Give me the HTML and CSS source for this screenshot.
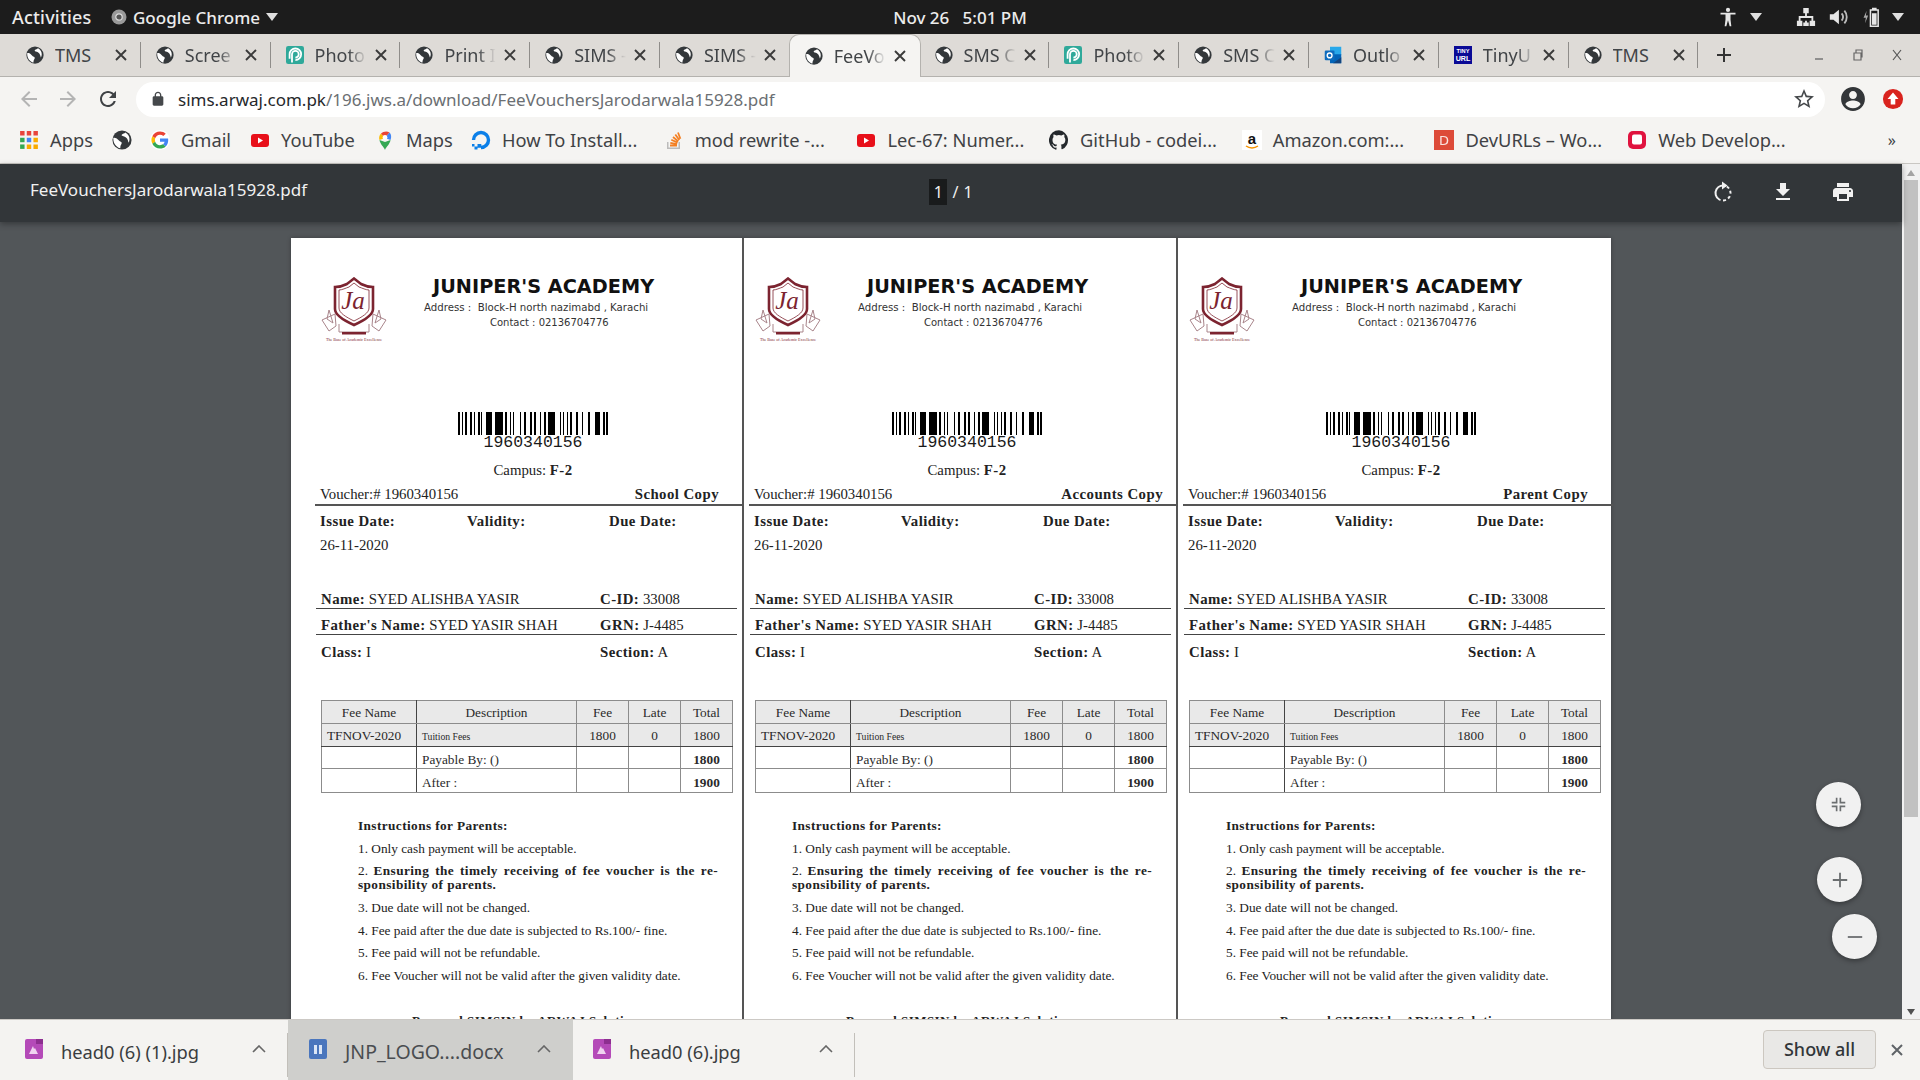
FILE: index.html
```html
<!DOCTYPE html>
<html lang="en">
<head>
<meta charset="utf-8">
<title>FeeVouchersJarodarwala15928.pdf</title>
<link rel="stylesheet" href="styles.css">
</head>
<body>
<svg class="defs" width="0" height="0" aria-hidden="true">
  <defs>
    <symbol id="globe" viewBox="0 0 24 24"><circle cx="12" cy="12" r="11.5" fill="#34383b"/><path fill="#fff" d="M1.500 9.500c2.500-.5 4 .5 5.500 2s2.500 2.500 4 3c1 .5 .8 2 0 3-.8 1-1 2.500-1 4.500-1.500-.3-3-1-4.500-2.500C3 17.500 1.500 14 1.500 9.500zM16 3c-1 1.200-3 1.500-4 2.300s-.3 1.600 1 2c2 .5 4 1.500 5 3s1.500 3.500 1.800 5c.8-1.200 1.200-2.800 1.200-4.300 0-3.500-2-6.500-5-8z"/></symbol>
    <symbol id="photopea" viewBox="0 0 24 24"><rect width="24" height="24" rx="3" fill="#2fa99a"/><path fill="none" stroke="#fff" stroke-width="2.400" d="M8 22V11a4.500 4.500 0 1 1 4.500 4.500M4.800 17V11a7.700 7.700 0 1 1 7.700 7.700"/></symbol>
    <symbol id="close" viewBox="0 0 14 14"><path d="M2 2l10 10M12 2L2 12" stroke="#3a3a3a" stroke-width="1.900" fill="none"/></symbol>
    <symbol id="caret" viewBox="0 0 12 8"><path d="M0 0h12L6 8z" fill="#dfdfdf"/></symbol>
    <symbol id="barcode" viewBox="0 0 150 23" preserveAspectRatio="none"><path fill="#000" d="M0 0h2v23H0zM4 0h1v23H4zM7 0h2v23H7zM12 0h2v23h-2zM16 0h1v23h-1zM20 0h2v23h-2zM23 0h1v23h-1zM28 0h6v23h-6zM37 0h8v23h-8zM47 0h2v23h-2zM52 0h1v23h-1zM55 0h1v23h-1zM62 0h1v23h-1zM66 0h2v23h-2zM72 0h2v23h-2zM76 0h2v23h-2zM82 0h1v23h-1zM86 0h2v23h-2zM90 0h7v23h-7zM102 0h1v23h-1zM105 0h1v23h-1zM109 0h1v23h-1zM112 0h2v23h-2zM118 0h2v23h-2zM124 0h1v23h-1zM130 0h2v23h-2zM137 0h5v23h-5zM145 0h2v23h-2zM148 0h2v23h-2z"/></symbol>
    <symbol id="crest" viewBox="0 0 66 64">
      <path fill="none" stroke="#a9858b" stroke-width="1" d="M14 37L1 43l7 11 7-5zM52 37l13 6-7 11-7-5zM8 33l-2 9 6 4zM58 33l2 9-6 4zM18 47v8h30v-8"/>
      <path fill="#fff" stroke="#7c2430" stroke-width="2.600" d="M33 1.500l7 5.500c4 2 8 3 12 3v22c0 6-10 12-19 16-9-4-19-10-19-16V10c4 0 8-1 12-3z"/>
      <path fill="none" stroke="#7c2430" stroke-width=".8" d="M33 6l5 4c3 1 7 3 10 3v18c0 5-7 9-15 13-8-4-15-8-15-13V13c3 0 7-2 10-3z"/>
      <path fill="#7c2430" d="M21 55h24v2.500H21z"/>
      <text class="crest-ja" x="32" y="32" text-anchor="middle">Ja</text>
      <text class="crest-tag" x="33" y="63.500" text-anchor="middle">The Base of Academic Excellence</text>
    </symbol>
  </defs>
</svg>

<div class="app">
  <header class="sysbar">
    <div class="sys-left">
      <span class="sys-activities">Activities</span>
      <svg class="sys-chrome" viewBox="0 0 16 16"><circle cx="8" cy="8" r="7.500" fill="#9a9a9a"/><circle cx="8" cy="8" r="3.200" fill="#555" stroke="#ddd" stroke-width="1.200"/></svg>
      <span>Google Chrome</span>
      <svg class="sys-caret" viewBox="0 0 12 8"><use href="#caret"/></svg>
    </div>
    <div class="sys-clock">Nov 26&nbsp;&nbsp;&nbsp;5:01 PM</div>
    <div class="sys-right">
      <svg class="sys-icon" viewBox="0 0 20 24"><circle cx="10" cy="3.500" r="2.500" fill="#e6e6e6"/><path fill="#e6e6e6" d="M1 7h18v2h-6v6l1 8h-2l-2-7-2 7H6l1-8V9H1z"/></svg>
      <svg class="sys-caret caret-a" viewBox="0 0 12 8"><use href="#caret"/></svg>
      <svg class="sys-icon net" viewBox="0 0 22 22"><path fill="#e6e6e6" d="M8 1h6v6h-2v3h7v5h2v6h-6v-6h2v-3h-12v3h2v6H1v-6h2v-5h7V7H8zM10 15h2v2h2v4H8v-4h2z"/></svg>
      <svg class="sys-icon vol" viewBox="0 0 22 22"><path fill="#e6e6e6" d="M2 8h4l6-5v16l-6-5H2z"/><path fill="none" stroke="#bbb" stroke-width="2" d="M15 7c2 2.500 2 5.500 0 8M18 4c3.500 4 3.500 10 0 14"/></svg>
      <svg class="sys-icon batt" viewBox="0 0 24 26"><path fill="none" stroke="#e6e6e6" stroke-width="2" d="M10 4h10v21H10z"/><path fill="#e6e6e6" d="M12 1h6v3h-6zM12 8h6v15h-6z"/><path fill="#aaa" d="M5 5L1 14h3l-1 7 4-10H4z"/></svg>
      <svg class="sys-caret caret-b" viewBox="0 0 12 8"><use href="#caret"/></svg>
    </div>
  </header>

  <nav class="tabstrip">
    <div class="tab"><svg class="fav"><use href="#globe"/></svg><span class="tab-title no-fade">TMS</span><svg class="tab-x"><use href="#close"/></svg></div>
    <div class="tab"><svg class="fav"><use href="#globe"/></svg><span class="tab-title">Scree</span><svg class="tab-x"><use href="#close"/></svg></div>
    <div class="tab"><svg class="fav"><use href="#photopea"/></svg><span class="tab-title">Photo</span><svg class="tab-x"><use href="#close"/></svg></div>
    <div class="tab"><svg class="fav"><use href="#globe"/></svg><span class="tab-title">Print I</span><svg class="tab-x"><use href="#close"/></svg></div>
    <div class="tab"><svg class="fav"><use href="#globe"/></svg><span class="tab-title">SIMS -</span><svg class="tab-x"><use href="#close"/></svg></div>
    <div class="tab"><svg class="fav"><use href="#globe"/></svg><span class="tab-title">SIMS -</span><svg class="tab-x"><use href="#close"/></svg></div>
    <div class="tab tab-active"><svg class="fav"><use href="#globe"/></svg><span class="tab-title">FeeVo</span><svg class="tab-x"><use href="#close"/></svg></div>
    <div class="tab"><svg class="fav"><use href="#globe"/></svg><span class="tab-title">SMS C</span><svg class="tab-x"><use href="#close"/></svg></div>
    <div class="tab"><svg class="fav"><use href="#photopea"/></svg><span class="tab-title">Photo</span><svg class="tab-x"><use href="#close"/></svg></div>
    <div class="tab"><svg class="fav"><use href="#globe"/></svg><span class="tab-title">SMS C</span><svg class="tab-x"><use href="#close"/></svg></div>
    <div class="tab"><svg class="fav" viewBox="0 0 24 24"><path fill="#28a8ea" d="M8 1h15v11H8z"/><path fill="#0364b8" d="M8 11h15v12H8z"/><path fill="#14447d" d="M12 23l11-8v8z"/><rect x="1" y="6" width="13" height="13" rx="1.500" fill="#0f6cbd"/><circle cx="7.500" cy="12.500" r="3.200" fill="none" stroke="#fff" stroke-width="1.800"/></svg><span class="tab-title">Outlo</span><svg class="tab-x"><use href="#close"/></svg></div>
    <div class="tab"><svg class="fav" viewBox="0 0 24 24"><rect width="24" height="24" fill="#0a0a96"/><text class="tiny-top" x="12" y="9" text-anchor="middle">TINY</text><text class="tiny-bot" x="12" y="20" text-anchor="middle">URL</text></svg><span class="tab-title">TinyU</span><svg class="tab-x"><use href="#close"/></svg></div>
    <div class="tab"><svg class="fav"><use href="#globe"/></svg><span class="tab-title no-fade">TMS</span><svg class="tab-x"><use href="#close"/></svg></div>
    <svg class="tab-plus" viewBox="0 0 16 16"><path d="M8 1v14M1 8h14" stroke="#333" stroke-width="2" fill="none"/></svg>
    <div class="winctl">
      <svg class="win-ic" viewBox="0 0 14 14"><path d="M3 11h8" stroke="#666" stroke-width="1.300"/></svg>
      <svg class="win-ic" viewBox="0 0 14 14"><path d="M3 5h7v7H3zM5 5V2h6v7h-1" stroke="#666" stroke-width="1.200" fill="none"/></svg>
      <svg class="win-ic" viewBox="0 0 14 14"><path d="M3 2l8 10M11 2L3 12" stroke="#555" stroke-width="1.200" fill="none"/></svg>
    </div>
  </nav>

  <div class="toolbar">
    <svg class="nav-ic" viewBox="0 0 24 24"><path fill="#b4b4b4" d="M20 11H7.830l5.590-5.590L12 4l-8 8 8 8 1.410-1.410L7.830 13H20v-2z"/></svg>
    <svg class="nav-ic nav-fwd" viewBox="0 0 24 24"><path fill="#b4b4b4" d="M4 11h12.170l-5.590-5.590L12 4l8 8-8 8-1.410-1.410L16.170 13H4v-2z"/></svg>
    <svg class="nav-ic nav-reload" viewBox="0 0 24 24"><path fill="#3f4245" d="M17.650 6.350C16.200 4.900 14.210 4 12 4c-4.420 0-7.990 3.580-7.990 8s3.570 8 7.990 8c3.730 0 6.840-2.550 7.730-6h-2.080c-.82 2.330-3.040 4-5.650 4-3.310 0-6-2.690-6-6s2.690-6 6-6c1.660 0 3.140.69 4.220 1.780L13 11h7V4l-2.350 2.350z"/></svg>
    <div class="omnibox">
      <svg class="lock" viewBox="0 0 24 24"><path fill="#45484b" d="M18 8h-1V6c0-2.760-2.240-5-5-5S7 3.240 7 6v2H6c-1.100 0-2 .9-2 2v10c0 1.100.9 2 2 2h12c1.100 0 2-.9 2-2V10c0-1.100-.9-2-2-2zM9 6c0-1.660 1.340-3 3-3s3 1.340 3 3v2H9V6z"/></svg>
      <span class="url"><span class="url-host">sims.arwaj.com.pk</span>/196.jws.a/download/FeeVouchersJarodarwala15928.pdf</span>
      <svg class="star" viewBox="0 0 24 24"><path fill="#45484b" d="M22 9.240l-7.190-.62L12 2 9.190 8.630 2 9.240l5.460 4.730L5.820 21 12 17.270 18.180 21l-1.630-7.030L22 9.240zM12 15.400l-3.760 2.270 1-4.280-3.320-2.880 4.380-.38L12 6.100l1.710 4.040 4.380.38-3.320 2.880 1 4.280L12 15.400z"/></svg>
    </div>
    <svg class="profile" viewBox="0 0 24 24"><path fill="#333639" d="M12 1C5.900 1 1 5.900 1 12s4.900 11 11 11 11-4.900 11-11S18.100 1 12 1zm0 3.500c2 0 3.600 1.700 3.600 3.800S14 12.100 12 12.100 8.400 10.400 8.400 8.300 10 4.500 12 4.500zm0 16c-2.900 0-5.500-1.500-7-3.700.1-2.300 4.700-3.500 7-3.500s6.900 1.200 7 3.500c-1.500 2.200-4.100 3.700-7 3.700z"/></svg>
    <svg class="update" viewBox="0 0 24 24"><circle cx="12" cy="12" r="11" fill="#d9231e"/><path fill="#fff" d="M12 5l6 7h-3.500v6h-5v-6H6z"/></svg>
  </div>

  <div class="bookmarks">
    <div class="bm bm-apps"><svg class="bm-ic" viewBox="0 0 18 18"><path fill="#e8453c" d="M1 1h4v4H1zM7 1h4v4H7zM13 1h4v4h-4z"/><path fill="#34a853" d="M1 7h4v4H1z"/><path fill="#f9ab00" d="M13 7h4v4h-4zM7 13h4v4H7zM13 13h4v4h-4z"/><path fill="#4285f4" d="M7 7h4v4H7z"/><path fill="#34a853" d="M1 13h4v4H1z"/></svg><span>Apps</span></div>
    <div class="bm bm-globe"><svg class="bm-ic"><use href="#globe"/></svg></div>
    <div class="bm bm-gmail"><svg class="bm-ic" viewBox="-4 -4 56 56"><circle cx="24" cy="24" r="28" fill="#fff"/><path fill="#EA4335" d="M24 9.500c3.540 0 6.710 1.220 9.210 3.600l6.850-6.850C35.900 2.380 30.470 0 24 0 14.620 0 6.510 5.380 2.560 13.220l7.980 6.190C12.430 13.720 17.740 9.500 24 9.500z"/><path fill="#4285F4" d="M46.980 24.550c0-1.570-.15-3.090-.38-4.550H24v9.020h12.940c-.58 2.960-2.260 5.480-4.780 7.180l7.730 6c4.510-4.180 7.090-10.360 7.090-17.650z"/><path fill="#FBBC05" d="M10.530 28.590c-.48-1.450-.76-2.990-.76-4.590s.27-3.140.76-4.590l-7.980-6.190C.92 16.460 0 20.120 0 24c0 3.880.92 7.540 2.560 10.780l7.970-6.190z"/><path fill="#34A853" d="M24 48c6.480 0 11.930-2.130 15.890-5.810l-7.730-6c-2.150 1.450-4.920 2.300-8.160 2.300-6.260 0-11.570-4.220-13.470-9.910l-7.980 6.190C6.510 42.620 14.620 48 24 48z"/></svg><span>Gmail</span></div>
    <div class="bm bm-yt"><svg class="bm-ic" viewBox="0 0 20 20"><rect x="1" y="4" width="18" height="13" rx="3" fill="#e8101a"/><path fill="#fff" d="M8 7.500l5 3-5 3z"/></svg><span>YouTube</span></div>
    <div class="bm bm-maps"><svg class="bm-ic" viewBox="0 0 20 20"><path fill="#34a853" d="M10 20c-1-3-5-6-5.500-10L10 12l5.500-2c-.5 4-4.500 7-5.500 10z"/><path fill="#fbbc04" d="M4.500 10C3.500 7.500 4.500 5 6 3.500l4 4.500z"/><path fill="#ea4335" d="M6 3.500C8 1.500 12 .5 14.500 2.500L10 8z"/><path fill="#4285f4" d="M14.500 2.500c2 1.500 2 5 1 7.500L10 8z"/><circle cx="10" cy="7.500" r="2.400" fill="#fff"/></svg><span>Maps</span></div>
    <div class="bm bm-long"><svg class="bm-ic" viewBox="0 0 20 20"><path fill="none" stroke="#0b7fe8" stroke-width="3.400" d="M10 17.500A7.500 7.500 0 1 0 2.500 10"/><path fill="#0b7fe8" d="M6.500 14h3.800v3.800H6.500zM3.500 16.500h3v3h-3zM1 14h2.500v2.500H1z"/></svg><span>How To Install...</span></div>
    <div class="bm bm-long"><svg class="bm-ic" viewBox="0 0 20 20"><path fill="#bcbbbb" d="M3 12v7h13v-7h-1.500v5.500h-10V12z"/><path fill="none" stroke="#f48024" stroke-width="1.800" d="M6 15.500h7M6.300 12.800l6.800 1.400M7.300 9.700l6.300 2.900M9 7l5.300 4.400M11.300 4.500l4 5.500M14 2.500l2.400 6.300"/></svg><span>mod rewrite -...</span></div>
    <div class="bm bm-long"><svg class="bm-ic" viewBox="0 0 20 20"><rect x="1" y="4" width="18" height="13" rx="3" fill="#e8101a"/><path fill="#fff" d="M8 7.500l5 3-5 3z"/></svg><span>Lec-67: Numer...</span></div>
    <div class="bm bm-long"><svg class="bm-ic" viewBox="0 0 24 24"><path fill="#24282c" d="M12 .3a12 12 0 0 0-3.800 23.400c.6.1.8-.3.8-.6v-2c-3.300.7-4-1.600-4-1.600-.6-1.400-1.400-1.800-1.400-1.800-1-.7.1-.7.1-.7 1.200.1 1.800 1.200 1.800 1.200 1 1.800 2.800 1.300 3.500 1 .1-.8.4-1.300.7-1.600-2.700-.3-5.500-1.300-5.500-6 0-1.200.5-2.300 1.300-3.100-.2-.4-.6-1.600 0-3.200 0 0 1-.3 3.400 1.200a11.500 11.500 0 0 1 6 0c2.300-1.500 3.300-1.200 3.300-1.200.6 1.600.2 2.800.1 3.200.8.800 1.300 1.900 1.300 3.100 0 4.600-2.800 5.600-5.500 6 .4.3.8 1 .8 2v3c0 .3.2.7.8.6A12 12 0 0 0 12 .3"/></svg><span>GitHub - codei...</span></div>
    <div class="bm bm-long"><svg class="bm-ic" viewBox="0 0 20 20"><rect width="20" height="20" fill="#fff"/><text class="amz" x="10" y="14" text-anchor="middle">a</text><path fill="none" stroke="#f79400" stroke-width="1.500" d="M4 16c3.500 2.500 8.500 2.500 12 0"/></svg><span>Amazon.com:...</span></div>
    <div class="bm bm-long"><svg class="bm-ic" viewBox="0 0 20 20"><rect width="20" height="20" fill="#dd4b39"/><text class="devd" x="10" y="15" text-anchor="middle">D</text></svg><span>DevURLs – Wo...</span></div>
    <div class="bm bm-long"><svg class="bm-ic" viewBox="0 0 20 20"><rect x="1" y="1" width="18" height="18" rx="5" fill="#e0133f"/><rect x="5" y="4.500" width="10" height="10" rx="2" fill="#fff"/></svg><span>Web Develop...</span></div>
    <span class="bm-more">»</span>
  </div>

  <div class="pdf">
    <main class="pdf-main">
      <div class="pdf-bar">
        <div class="pdf-name">FeeVouchersJarodarwala15928.pdf</div>
        <div class="pdf-pages"><span class="pdf-page-box">1</span><span class="pdf-sep">/</span><span>1</span></div>
        <div class="pdf-actions">
          <svg class="pdf-ic" viewBox="0 0 24 24"><circle cx="12" cy="13" r="7.500" fill="none" stroke="#f1f1f1" stroke-width="2" stroke-dasharray="3 2.500 3 2.500 3 2.500 3 2.500 24 2" transform="rotate(-60 12 13)"/><path fill="#f1f1f1" d="M11 1.500l5.500 4-5.500 4z"/></svg>
          <svg class="pdf-ic" viewBox="0 0 24 24"><path fill="#f1f1f1" d="M19 9h-4V3H9v6H5l7 7 7-7zM5 18v2h14v-2H5z"/></svg>
          <svg class="pdf-ic" viewBox="0 0 24 24"><path fill="#f1f1f1" d="M19 8H5c-1.660 0-3 1.340-3 3v6h4v4h12v-4h4v-6c0-1.660-1.340-3-3-3zm-3 11H8v-5h8v5zm3-7c-.55 0-1-.45-1-1s.45-1 1-1 1 .45 1 1-.45 1-1 1zm-1-9H6v4h12V3z"/></svg>
        </div>
      </div>
      <div class="viewer">
        <div class="sheet">

          <section class="voucher voucher-first">
            <div class="v-head">
              <svg class="crest"><use href="#crest"/></svg>
              <div class="org">
                <div class="org-name">JUNIPER'S ACADEMY</div>
                <div class="org-addr">Address :&nbsp; Block-H north nazimabd , Karachi</div>
                <div class="org-contact">Contact : 02136704776</div>
              </div>
            </div>
            <div class="code">
              <svg class="bars"><use href="#barcode"/></svg>
              <div class="code-num">1960340156</div>
              <div class="campus">Campus: <b>F-2</b></div>
            </div>
            <div class="v-id"><span>Voucher:# 1960340156</span><b>School Copy</b></div>
            <div class="dates"><b>Issue Date:</b><b>Validity:</b><b>Due Date:</b><span>26-11-2020</span></div>
            <div class="info info-first"><span><b>Name:</b> SYED ALISHBA YASIR</span><span><b>C-ID:</b> 33008</span></div>
            <div class="info"><span><b>Father's Name:</b> SYED YASIR SHAH</span><span><b>GRN:</b> J-4485</span></div>
            <div class="info info-last"><span><b>Class:</b> I</span><span><b>Section:</b> A</span></div>
            <table class="fees">
              <tr class="fee-head"><td>Fee Name</td><td>Description</td><td>Fee</td><td>Late</td><td>Total</td></tr>
              <tr class="fee-item"><td class="left">TFNOV-2020</td><td class="left"><small>Tuition Fees</small></td><td>1800</td><td>0</td><td>1800</td></tr>
              <tr class="fee-pay"><td></td><td class="left">Payable By: ()</td><td></td><td></td><td><b>1800</b></td></tr>
              <tr class="fee-after"><td></td><td class="left">After :</td><td></td><td></td><td><b>1900</b></td></tr>
            </table>
            <div class="notes">
              <p class="note-title"><b>Instructions for Parents:</b></p>
              <p>1. Only cash payment will be acceptable.</p>
              <p><span class="note-just">2. <b>Ensuring the timely receiving of fee voucher is the re-</b></span><b class="note-cont">sponsibility of parents.</b></p>
              <p>3. Due date will not be changed.</p>
              <p>4. Fee paid after the due date is subjected to Rs.100/- fine.</p>
              <p>5. Fee paid will not be refundable.</p>
              <p>6. Fee Voucher will not be valid after the given validity date.</p>
            </div>
            <div class="powered"><b>Powered SIMSIN by ARWAJ Solutions</b></div>
          </section>

          <section class="voucher voucher-mid">
            <div class="v-head">
              <svg class="crest"><use href="#crest"/></svg>
              <div class="org">
                <div class="org-name">JUNIPER'S ACADEMY</div>
                <div class="org-addr">Address :&nbsp; Block-H north nazimabd , Karachi</div>
                <div class="org-contact">Contact : 02136704776</div>
              </div>
            </div>
            <div class="code">
              <svg class="bars"><use href="#barcode"/></svg>
              <div class="code-num">1960340156</div>
              <div class="campus">Campus: <b>F-2</b></div>
            </div>
            <div class="v-id"><span>Voucher:# 1960340156</span><b>Accounts Copy</b></div>
            <div class="dates"><b>Issue Date:</b><b>Validity:</b><b>Due Date:</b><span>26-11-2020</span></div>
            <div class="info info-first"><span><b>Name:</b> SYED ALISHBA YASIR</span><span><b>C-ID:</b> 33008</span></div>
            <div class="info"><span><b>Father's Name:</b> SYED YASIR SHAH</span><span><b>GRN:</b> J-4485</span></div>
            <div class="info info-last"><span><b>Class:</b> I</span><span><b>Section:</b> A</span></div>
            <table class="fees">
              <tr class="fee-head"><td>Fee Name</td><td>Description</td><td>Fee</td><td>Late</td><td>Total</td></tr>
              <tr class="fee-item"><td class="left">TFNOV-2020</td><td class="left"><small>Tuition Fees</small></td><td>1800</td><td>0</td><td>1800</td></tr>
              <tr class="fee-pay"><td></td><td class="left">Payable By: ()</td><td></td><td></td><td><b>1800</b></td></tr>
              <tr class="fee-after"><td></td><td class="left">After :</td><td></td><td></td><td><b>1900</b></td></tr>
            </table>
            <div class="notes">
              <p class="note-title"><b>Instructions for Parents:</b></p>
              <p>1. Only cash payment will be acceptable.</p>
              <p><span class="note-just">2. <b>Ensuring the timely receiving of fee voucher is the re-</b></span><b class="note-cont">sponsibility of parents.</b></p>
              <p>3. Due date will not be changed.</p>
              <p>4. Fee paid after the due date is subjected to Rs.100/- fine.</p>
              <p>5. Fee paid will not be refundable.</p>
              <p>6. Fee Voucher will not be valid after the given validity date.</p>
            </div>
            <div class="powered"><b>Powered SIMSIN by ARWAJ Solutions</b></div>
          </section>

          <section class="voucher voucher-last">
            <div class="v-head">
              <svg class="crest"><use href="#crest"/></svg>
              <div class="org">
                <div class="org-name">JUNIPER'S ACADEMY</div>
                <div class="org-addr">Address :&nbsp; Block-H north nazimabd , Karachi</div>
                <div class="org-contact">Contact : 02136704776</div>
              </div>
            </div>
            <div class="code">
              <svg class="bars"><use href="#barcode"/></svg>
              <div class="code-num">1960340156</div>
              <div class="campus">Campus: <b>F-2</b></div>
            </div>
            <div class="v-id"><span>Voucher:# 1960340156</span><b>Parent Copy</b></div>
            <div class="dates"><b>Issue Date:</b><b>Validity:</b><b>Due Date:</b><span>26-11-2020</span></div>
            <div class="info info-first"><span><b>Name:</b> SYED ALISHBA YASIR</span><span><b>C-ID:</b> 33008</span></div>
            <div class="info"><span><b>Father's Name:</b> SYED YASIR SHAH</span><span><b>GRN:</b> J-4485</span></div>
            <div class="info info-last"><span><b>Class:</b> I</span><span><b>Section:</b> A</span></div>
            <table class="fees">
              <tr class="fee-head"><td>Fee Name</td><td>Description</td><td>Fee</td><td>Late</td><td>Total</td></tr>
              <tr class="fee-item"><td class="left">TFNOV-2020</td><td class="left"><small>Tuition Fees</small></td><td>1800</td><td>0</td><td>1800</td></tr>
              <tr class="fee-pay"><td></td><td class="left">Payable By: ()</td><td></td><td></td><td><b>1800</b></td></tr>
              <tr class="fee-after"><td></td><td class="left">After :</td><td></td><td></td><td><b>1900</b></td></tr>
            </table>
            <div class="notes">
              <p class="note-title"><b>Instructions for Parents:</b></p>
              <p>1. Only cash payment will be acceptable.</p>
              <p><span class="note-just">2. <b>Ensuring the timely receiving of fee voucher is the re-</b></span><b class="note-cont">sponsibility of parents.</b></p>
              <p>3. Due date will not be changed.</p>
              <p>4. Fee paid after the due date is subjected to Rs.100/- fine.</p>
              <p>5. Fee paid will not be refundable.</p>
              <p>6. Fee Voucher will not be valid after the given validity date.</p>
            </div>
            <div class="powered"><b>Powered SIMSIN by ARWAJ Solutions</b></div>
          </section>

        </div>
      </div>
      <div class="fab fab-fit"><svg viewBox="0 0 20 20"><path fill="none" stroke="#6b6e70" stroke-width="2.200" d="M7.500 1v6.500H1M12.500 1v6.500H19M7.500 19v-6.500H1M12.500 19v-6.500H19"/></svg></div>
      <div class="fab fab-plus"><svg viewBox="0 0 20 20"><path fill="none" stroke="#6b6e70" stroke-width="2" d="M10 2v16M2 10h16"/></svg></div>
      <div class="fab fab-minus"><svg viewBox="0 0 20 20"><path fill="none" stroke="#6b6e70" stroke-width="2" d="M2 10h16"/></svg></div>
    </main>
    <aside class="scrollbar">
      <span class="sb-up"></span>
      <div class="sb-track"><div class="sb-thumb"></div></div>
      <span class="sb-down"></span>
    </aside>
  </div>

  <footer class="downloads">
    <div class="dl">
      <svg class="dl-ic" viewBox="0 0 20 22"><rect x="1" y="1" width="18" height="20" rx="2" fill="#b44ab8"/><path fill="#f0d4f0" d="M5 16l4-8 1 3 1-1 3 6z"/><rect x="12" y="1" width="7" height="5" fill="#8d2f90"/></svg>
      <span class="dl-name">head0 (6) (1).jpg</span>
      <svg class="dl-chev" viewBox="0 0 14 8"><path d="M1 7l6-6 6 6" fill="none" stroke="#666" stroke-width="1.600"/></svg>
    </div>
    <div class="dl dl-hover">
      <svg class="dl-ic" viewBox="0 0 20 22"><rect x="1" y="1" width="18" height="20" rx="2" fill="#4a76bd"/><path fill="#dbe6f6" d="M6 7h3v9H6zM11 7h3v9h-3z"/></svg>
      <span class="dl-name dl-muted">JNP_LOGO....docx</span>
      <svg class="dl-chev" viewBox="0 0 14 8"><path d="M1 7l6-6 6 6" fill="none" stroke="#666" stroke-width="1.600"/></svg>
    </div>
    <div class="dl dl-third">
      <svg class="dl-ic" viewBox="0 0 20 22"><rect x="1" y="1" width="18" height="20" rx="2" fill="#b44ab8"/><path fill="#f0d4f0" d="M5 16l4-8 1 3 1-1 3 6z"/><rect x="12" y="1" width="7" height="5" fill="#8d2f90"/></svg>
      <span class="dl-name">head0 (6).jpg</span>
      <svg class="dl-chev" viewBox="0 0 14 8"><path d="M1 7l6-6 6 6" fill="none" stroke="#666" stroke-width="1.600"/></svg>
    </div>
    <button class="show-all">Show all</button>
    <svg class="dl-close" viewBox="0 0 14 14"><path d="M2 2l10 10M12 2L2 12" stroke="#5f6368" stroke-width="2" fill="none"/></svg>
  </footer>
</div>
</body>
</html>
```

FILE: styles.css
```css
* { box-sizing: border-box; }
html, body { margin: 0; height: 100%; overflow: hidden; }
body { font-family: "Noto Sans", "DejaVu Sans", sans-serif; color: #3a3d40; }
.defs { position: absolute; }
svg { display: block; flex: none; }
.app { display: flex; flex-direction: column; height: 1080px; width: 1920px; }

/* system bar */
.sysbar { height: 34px; background: #1c1c1c; color: #ececec; display: grid; grid-template-columns: 1fr auto 1fr; align-items: center; font-size: 17px; font-weight: 500; flex: none; }
.sys-left { display: flex; align-items: center; padding-left: 12px; }
.sys-activities { width: 99px; font-size: 18px; letter-spacing: .2px; }
.sys-chrome { width: 16px; height: 16px; margin-right: 6px; }
.sys-caret { width: 12px; height: 8px; margin-left: 6px; }
.sys-clock { text-align: center; }
.sys-right { display: flex; align-items: center; justify-content: flex-end; padding-right: 16px; }
.sys-icon { height: 20px; width: 20px; }
.caret-a { margin: 0 34px 0 12px; }
.net { margin-right: 12px; }
.vol { margin-right: 14px; }
.caret-b { margin-left: 10px; }

/* tabs */
.tabstrip { height: 43px; background: #dedbd7; display: flex; align-items: center; padding-left: 11px; border-bottom: 1px solid #b4b2ae; flex: none; }
.tab { width: 129.8px; height: 26px; display: flex; align-items: center; padding-left: 15px; border-right: 1px solid #8f8d8a; font-size: 18px; flex: none; color: #414447; }
.tab-active { height: 42px; margin-top: 1px; background: #f5f4f2; border-right: 0; border-radius: 9px 9px 0 0; box-shadow: 0 0 0 1px #b4b2ae; }
.tab:nth-child(6) { border-right: 0; }
.fav { width: 18px; height: 18px; }
.tab-title { width: 54px; margin-left: 11px; overflow: hidden; white-space: nowrap; -webkit-mask-image: linear-gradient(to right, #000 62%, transparent 96%); mask-image: linear-gradient(to right, #000 62%, transparent 96%); }
.no-fade { -webkit-mask-image: none; mask-image: none; }
.tab-x { width: 14px; height: 14px; margin-left: 5px; }
.tiny-top { font: bold 7.5px "Liberation Sans", sans-serif; fill: #fff; }
.tiny-bot { font: bold 9.5px "Liberation Sans", sans-serif; fill: #fff; }
.tab-plus { width: 16px; height: 16px; margin-left: 18px; }
.winctl { margin-left: auto; display: flex; gap: 25px; padding-right: 16px; }
.win-ic { width: 14px; height: 14px; }

/* toolbar */
.toolbar { height: 44px; background: #f5f4f2; display: flex; align-items: center; flex: none; padding-left: 17px; }
.nav-ic { width: 24px; height: 24px; }
.nav-fwd { margin-left: 15px; }
.nav-reload { margin-left: 16px; }
.omnibox { margin-left: 16px; width: 1689px; height: 35px; background: #fff; border-radius: 18px; display: flex; align-items: center; padding-left: 14px; }
.lock { width: 16px; height: 16px; }
.url { margin-left: 12px; font-size: 17px; color: #6b6f73; white-space: nowrap; }
.url-host { color: #26282b; }
.star { width: 24px; height: 24px; margin-left: auto; margin-right: 9px; }
.profile { width: 26px; height: 26px; margin-left: 15px; }
.update { width: 22px; height: 22px; margin-left: 16px; }

/* bookmarks */
.bookmarks { height: 43px; background: #f5f4f2; display: flex; align-items: center; padding: 0 0 5px 19px; border-bottom: 1px solid #c9c7c3; font-size: 18.3px; color: #3f4245; flex: none; }
.bm { display: flex; align-items: center; gap: 11px; white-space: nowrap; flex: none; overflow: hidden; }
.bm-ic { width: 20px; height: 20px; }
.bm-apps { width: 93px; }
.bm-globe { width: 38px; }
.bm-gmail { width: 100px; }
.bm-yt { width: 125px; }
.bm-maps { width: 96px; }
.bm-long { width: 192.700px; }
.bm-more { margin-left: 68px; font-size: 16px; }

/* pdf */
.pdf { flex: 1; display: flex; min-height: 0; }
.pdf-main { flex: 1; position: relative; display: flex; flex-direction: column; min-width: 0; background: #525659; }
.pdf-bar { height: 58px; background: #323639; color: #f1f1f1; display: grid; grid-template-columns: 1fr auto 1fr; align-items: center; flex: none; box-shadow: 0 2px 6px rgba(0,0,0,.35); position: relative; z-index: 1; font-size: 17px; padding-bottom: 8px; }
.pdf-name { padding-left: 30px; }
.pdf-pages { display: flex; align-items: center; gap: 5px; font-size: 16px; margin-top: 6px; }
.pdf-page-box { width: 18px; height: 26px; background: #191b1c; display: flex; align-items: center; justify-content: center; }
.pdf-actions { display: flex; justify-content: flex-end; gap: 36px; padding-right: 47px; margin-top: 5px; }
.pdf-ic { width: 24px; height: 24px; }
.viewer { flex: 1; min-height: 0; overflow: hidden; padding-top: 16px; display: flex; justify-content: center; }
.sheet { width: 1320px; height: 1000px; background: #fff; display: flex; flex: none; align-items: flex-start; font-family: "Liberation Serif", "Times New Roman", serif; font-size: 14.8px; color: #222; box-shadow: 0 0 4px rgba(0,0,0,.3); }
.sheet b { letter-spacing: .45px; }

/* voucher */
.voucher { width: 434px; height: 1000px; flex: none; border-right: 2px solid #555; }
.voucher-first { width: 453px; padding-left: 19px; }
.voucher-last { width: 433px; border-right: 0; }
.v-head { height: 174px; padding: 39px 0 0 11px; display: flex; align-items: flex-start; }
.crest { width: 66px; height: 64px; }
.crest-ja { font: italic 25px "Liberation Serif", serif; fill: #7c2430; }
.crest-tag { font: 4.100px "Liberation Serif", serif; fill: #7c2430; }
.org { margin-left: 46px; padding-top: 1px; font-family: "DejaVu Sans", sans-serif; color: #333; white-space: nowrap; }
.org-name { font-size: 19.300px; font-weight: 700; line-height: 18px; color: #111; }
.org-addr { font-size: 10.200px; line-height: 16px; margin: 4px 0 0 -9px; }
.org-contact { font-size: 10px; line-height: 16px; margin: -1px 0 0 57px; }
.code { width: 150px; margin-left: 148px; text-align: center; white-space: nowrap; }
.bars { width: 150px; height: 23px; }
.code-num { font: 16.500px/16px "Liberation Mono", monospace; color: #1a1a1a; }
.campus { line-height: 18px; margin-top: 10px; }
.v-id { margin: 7px -2px 0 5px; padding: 0 25px 0 5px; height: 20px; line-height: 16px; display: flex; justify-content: space-between; border-bottom: 2px solid #555; white-space: nowrap; }
.voucher-mid .v-id { padding-right: 15px; }
.dates { display: grid; grid-template-columns: 147px 142px 1fr; padding-left: 10px; margin-top: 6px; line-height: 18px; row-gap: 6px; }
.info { margin-left: 6px; width: 421px; display: grid; grid-template-columns: 279px 1fr; padding: 7px 0 0 5px; line-height: 18px; border-bottom: 1.500px solid #444; white-space: nowrap; }
.info-first { margin-top: 36px; padding-top: 0; }
.info-last { border-bottom: 0; padding-top: 8px; }
.fees { margin: 39px 0 0 11px; width: 412px; border-collapse: collapse; table-layout: fixed; font-size: 13.300px; text-align: center; border: 1.500px solid #444; color: #2a2a2a; }
.fees td { padding: 2px 0 0; border: 1px solid #8c8c8c; line-height: 14px; }
.fees td:first-child { width: 95px; border-right: 1.500px solid #444; }
.fees td:nth-child(2) { width: 160px; }
.fees td:nth-child(3), .fees td:nth-child(4) { width: 52px; }
.fees .left { text-align: left; padding-left: 5px; }
.fees small { font-size: 9.700px; }
.sheet .fees b { letter-spacing: 0; }
.fee-head { height: 23px; background: #e9e9e9; }
.fee-item { height: 23px; background: #e9e9e9; }
.fee-item td { border-bottom: 1.500px solid #444; }
.fee-pay { height: 22px; }
.fees .fee-pay td { padding-top: 4px; }
.fee-after { height: 24px; }
.fees .fee-after td { padding-top: 5px; }
.notes { margin: 26px 0 0 48px; width: 360px; font-size: 13.300px; line-height: 14px; }
.notes p { margin: 0 0 8.700px; }
.sheet .notes b { letter-spacing: .4px; }
.note-just { display: block; text-align: justify; text-align-last: justify; }
.note-cont { display: block; }
.powered { margin: 31px 0 0 102px; font-size: 13px; line-height: 14px; white-space: nowrap; }

/* fabs */
.fab { position: absolute; width: 45px; height: 45px; border-radius: 50%; background: #f1f1f1; display: flex; align-items: center; justify-content: center; box-shadow: 0 2px 5px rgba(0,0,0,.35); z-index: 2; }
.fab svg { width: 18px; height: 18px; }
.fab-fit { right: 41px; top: 618px; }
.fab-fit svg { width: 15px; height: 15px; }
.fab-plus { right: 40px; top: 693px; }
.fab-minus { right: 25px; top: 750px; }

/* scrollbar */
.scrollbar { width: 18px; background: #f1f1f1; display: flex; flex-direction: column; align-items: center; flex: none; padding: 6px 2px 4px; }
.sb-up { width: 0; height: 0; border: 4px solid transparent; border-top: 0; border-bottom: 6px solid #a3a3a3; }
.sb-track { flex: 1; width: 100%; padding-top: 4px; }
.sb-thumb { height: 637px; background: #c1c1c1; }
.sb-down { width: 0; height: 0; border: 4px solid transparent; border-bottom: 0; border-top: 6px solid #505050; }

/* downloads */
.downloads { height: 61px; background: #f4f3f1; border-top: 1px solid #ccc9c5; display: flex; align-items: center; flex: none; font-size: 18.300px; color: #3a3d40; }
.dl { width: 288px; height: 60px; display: flex; align-items: center; padding: 3px 0 0 24px; flex: none; position: relative; }
.dl:first-child::after, .dl-third::after { content: ""; position: absolute; right: 0; top: 13px; height: 44px; width: 1px; background: #c2bfba; }
.dl-hover { width: 285px; background: #cfcfcc; padding-left: 20px; }
.dl-third { width: 282px; padding-left: 19px; }
.dl-ic { width: 20px; height: 22px; margin-top: -6px; }
.dl-name { margin-left: 17px; flex: 1; white-space: nowrap; }
.dl-muted { color: #4a4d50; font-size: 19.500px; }
.dl-chev { width: 14px; height: 8px; margin: -6px 22px 0 0; }
.show-all { margin: -2px 0 0 auto; width: 113px; height: 39px; font: 500 18px "Noto Sans", sans-serif; color: #323639; background: #e9e8e6; border: 1px solid #ccc7c0; border-radius: 4px; padding: 0; }
.dl-close { width: 14px; height: 14px; margin: 0 16px 0 14px; }

/* small favicon text */
.amz { font: bold 15px "Liberation Sans", sans-serif; fill: #111; }
.devd { font: 13px "DejaVu Sans", sans-serif; fill: #fff; opacity: .85; }
```
